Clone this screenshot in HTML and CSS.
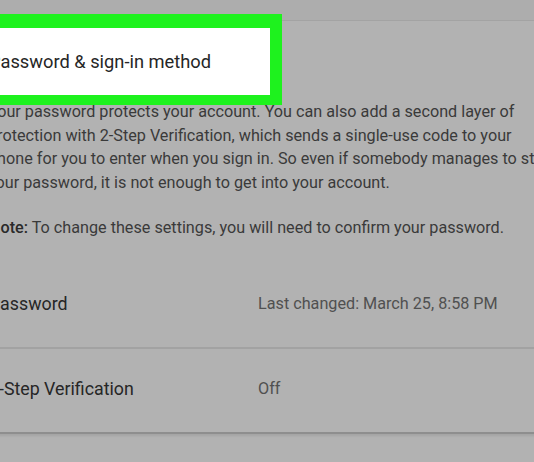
FILE: index.html
```html
<!DOCTYPE html>
<html>
<head>
<meta charset="utf-8">
<link rel="stylesheet" href="styles.css">
</head>
<body>
<div class="topbar"></div>
<div class="content">
  <div class="title-box"><span class="title">Password &amp; sign-in method</span></div>
  <p class="desc">Your password protects your account. You can also add a second layer of<br>protection with 2-Step Verification, which sends a single-use code to your<br>phone for you to enter when you sign in. So even if somebody manages to steal<br>your password, it is not enough to get into your account.</p>
  <p class="note"><b>Note:</b> To change these settings, you will need to confirm your password.</p>
  <div class="row first">
    <div class="label">Password</div>
    <div class="value">Last changed: March 25, 8:58 PM</div>
  </div>
  <div class="row last">
    <div class="label">2-Step Verification</div>
    <div class="value">Off</div>
  </div>
</div>
</body>
</html>
```
FILE: styles.css
```css
html, body {
  margin: 0;
  padding: 0;
  background: #b2b2b2;
  overflow: hidden;
  width: 534px;
  height: 462px;
  font-family: Roboto, "Noto Sans", Arial, sans-serif;
}
.topbar {
  height: 20px;
  background: #adadad;
  border-bottom: 1px solid #a3a3a3;
}
.content {
  margin-left: -11px;
  width: 620px;
}
.title-box {
  position: relative;
  z-index: 2;
  margin-top: -7px;
  width: 281px;
  height: 67px;
  background: #ffffff;
  border: 14px solid #1ef21e;
  border-right-width: 12px;
  border-bottom-width: 10px;
  border-left-width: 0;
  display: flex;
  align-items: center;
}
.title {
  font-size: 18.3px;
  color: #262626;
}
.desc {
  margin: -5px 0 0 -1px;
  font-size: 16.2px;
  line-height: 23.6px;
  color: #3a3a3a;
  white-space: nowrap;
}
.note {
  margin: 22px 0 0 0;
  font-size: 16.2px;
  line-height: 23.6px;
  color: #3a3a3a;
  white-space: nowrap;
}
.note b {
  font-weight: 500;
  color: #2a2a2a;
}
.row {
  display: flex;
  align-items: center;
  box-sizing: border-box;
  height: 85px;
  padding-bottom: 3px;
  border-bottom: 2px solid #a2a2a2;
  width: 600px;
}
.row.first {
  margin-top: 24px;
}
.row.last {
  border-bottom: 2px solid #8e8e8e;
  box-shadow: 0 2px 2px rgba(0,0,0,0.08);
}
.label {
  width: 269px;
  font-size: 17.8px;
  color: #262626;
}
.value {
  font-size: 16.2px;
  color: #505050;
}
```
